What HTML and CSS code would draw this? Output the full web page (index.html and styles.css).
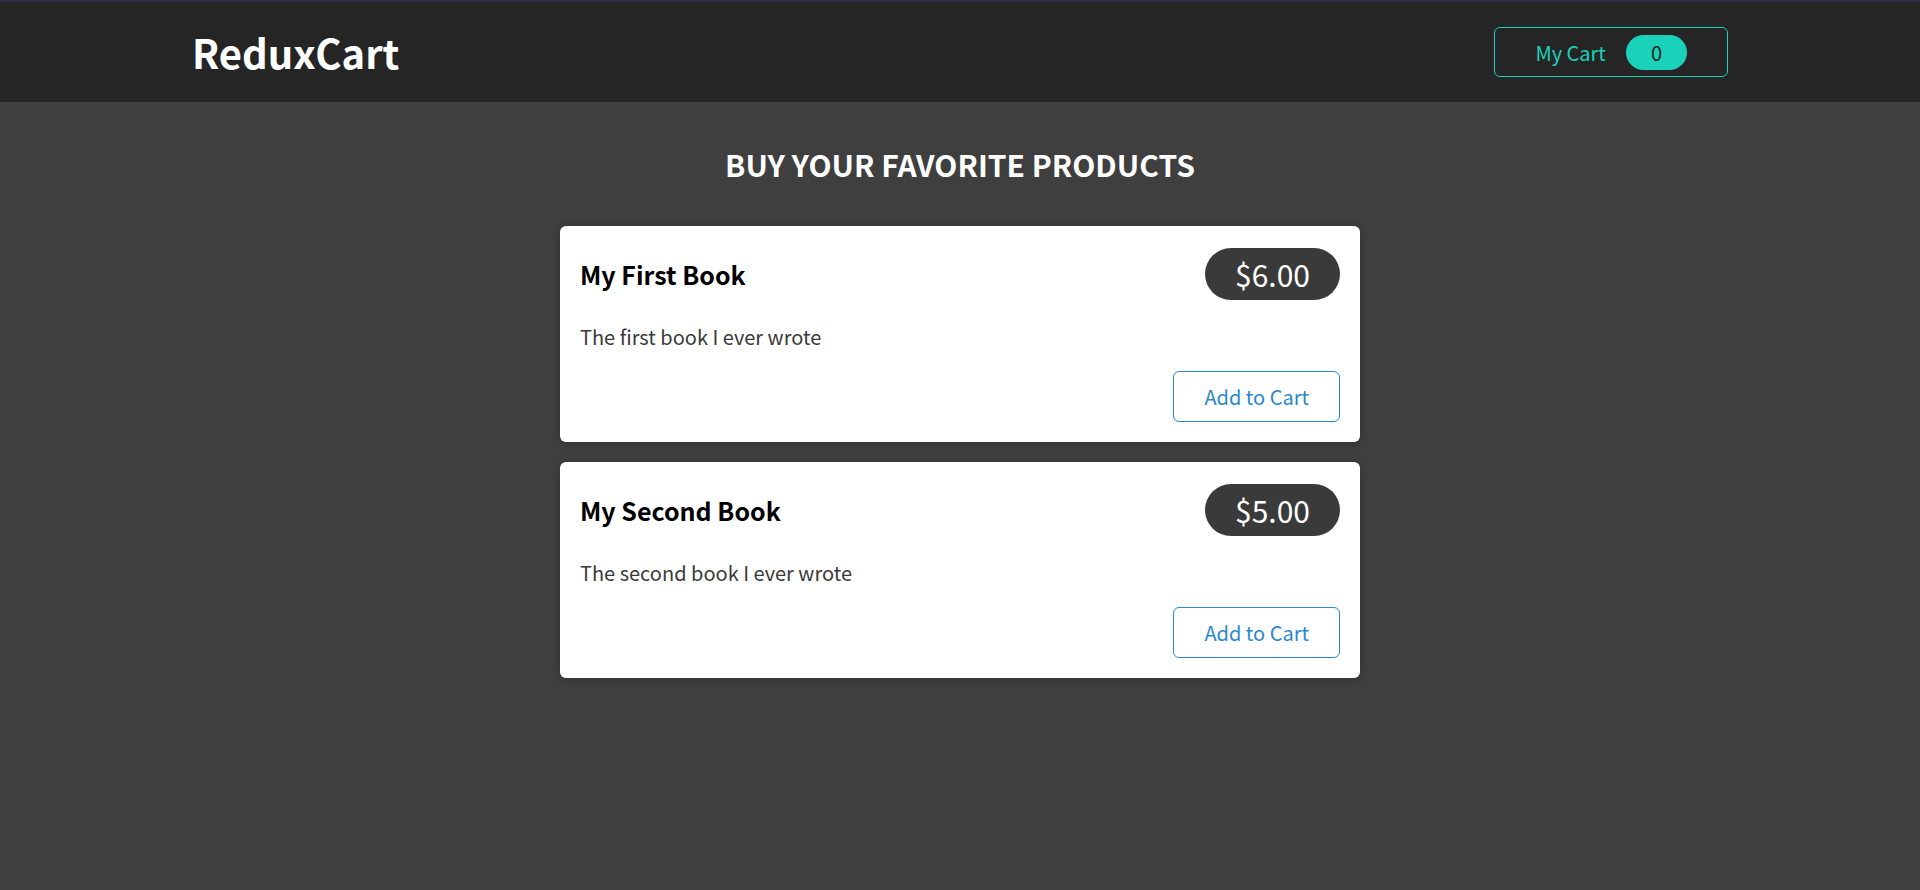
FILE: index.html
```html
<!DOCTYPE html>
<html lang="en">
<head>
<meta charset="utf-8">
<title>ReduxCart</title>
<link rel="stylesheet" href="styles.css">
</head>
<body>
<header class="main-header">
  <h1 class="logo">ReduxCart</h1>
  <nav>
    <ul class="nav-list">
      <li>
        <button class="cart-button">
          <span class="cart-label">My Cart</span>
          <span class="badge">0</span>
        </button>
      </li>
    </ul>
  </nav>
</header>
<main class="content">
  <section class="products">
    <h2 class="products-title">Buy your favorite products</h2>
    <ul class="product-list">
      <li class="card product">
        <header class="product-head">
          <h3 class="product-title">My First Book</h3>
          <div class="price">$6.00</div>
        </header>
        <p class="product-desc">The first book I ever wrote</p>
        <div class="actions">
          <button class="add-button">Add to Cart</button>
        </div>
      </li>
      <li class="card product">
        <header class="product-head">
          <h3 class="product-title">My Second Book</h3>
          <div class="price">$5.00</div>
        </header>
        <p class="product-desc">The second book I ever wrote</p>
        <div class="actions">
          <button class="add-button">Add to Cart</button>
        </div>
      </li>
    </ul>
  </section>
</main>
</body>
</html>
```
FILE: styles.css
```css
* {
  box-sizing: border-box;
}

html {
  font-family: "Noto Sans CJK JP", "Noto Sans", sans-serif;
  font-size: 20px;
}

body {
  margin: 0;
  min-height: 100vh;
  background-color: #3f3f3f;
}

.main-header {
  width: 100%;
  height: 102px;
  border-top: 2px solid #2f2b44;
  padding: 0 10%;
  display: flex;
  justify-content: space-between;
  align-items: center;
  background-color: #252525;
}

.logo {
  margin: 0;
  color: #ffffff;
  font-size: 40px;
  font-weight: 700;
}

.nav-list {
  list-style: none;
  margin: 0;
  padding: 0;
}

.cart-button {
  background-color: transparent;
  border: 1px solid #1ad1b9;
  border-radius: 6px;
  color: #1ad1b9;
  font: inherit;
  padding: 6.5px 30px;
  display: flex;
  align-items: center;
  cursor: pointer;
}

.cart-label {
  margin: 0 10px;
}

.badge {
  margin: 0 10px;
  background-color: #1ad1b9;
  border-radius: 30px;
  padding: 3px 25px;
  color: #1d1d1d;
}

.content {
  margin: 0 auto;
  width: 90%;
  max-width: 800px;
}

.products-title {
  margin: 40px auto;
  text-align: center;
  text-transform: uppercase;
  color: #ffffff;
  font-size: 30px;
  font-weight: 700;
}

.product-list {
  list-style: none;
  margin: 0 auto;
  padding: 0;
}

.card {
  padding: 20px;
  margin: 20px auto;
  border-radius: 6px;
  box-shadow: 0 1px 8px rgba(0, 0, 0, 0.25);
  background-color: #ffffff;
}

.product-head {
  display: flex;
  justify-content: space-between;
  align-items: center;
}

.product-title {
  margin: 10px 0;
  font-size: 25px;
  font-weight: 700;
  color: #000000;
}

.price {
  font-size: 30px;
  background-color: #3a3a3a;
  border-radius: 30px;
  padding: 3.75px 30px;
  color: #ffffff;
}

.product-desc {
  color: #3a3a3a;
  margin: 20px 0;
}

.actions {
  display: flex;
  justify-content: flex-end;
}

.add-button {
  font: inherit;
  cursor: pointer;
  background-color: transparent;
  border: 1px solid #2a89cc;
  color: #2a89cc;
  padding: 10px 30px;
  border-radius: 6px;
}
```
